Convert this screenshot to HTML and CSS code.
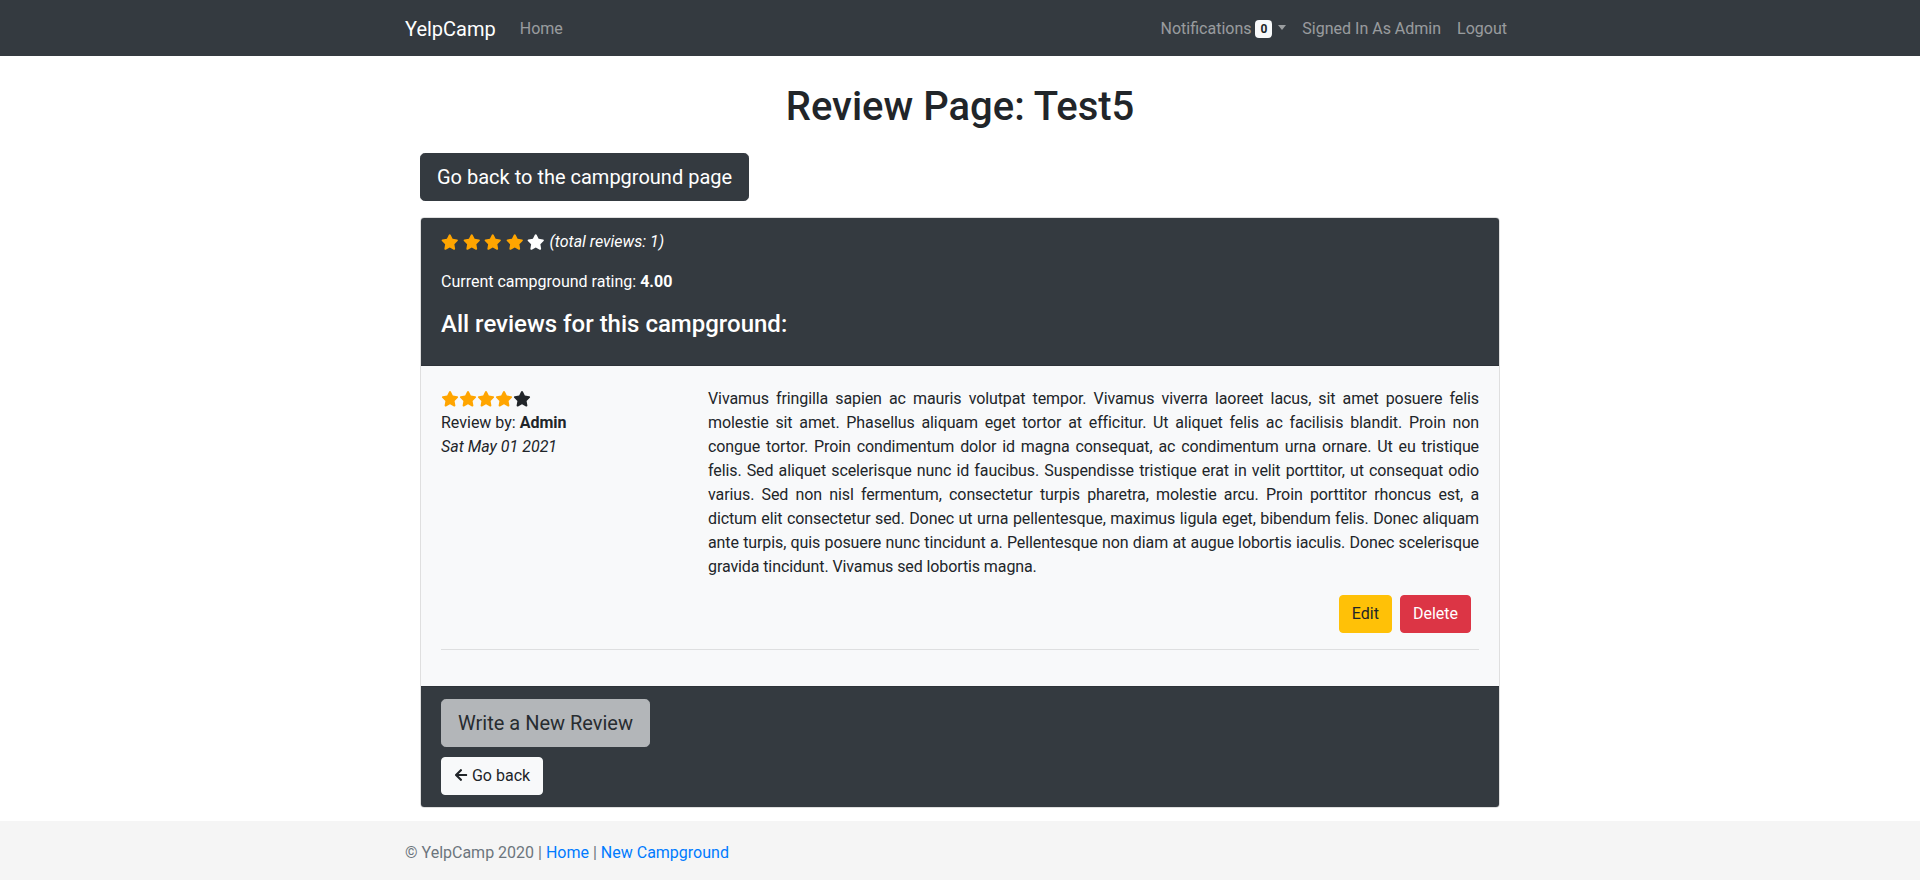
FILE: index.html
```html
<!DOCTYPE html>
<html lang="en">
<head>
<meta charset="utf-8">
<title>YelpCamp - Review Page</title>
<link rel="stylesheet" href="styles.css">
</head>
<body>
<nav class="navbar">
  <div class="container nav-inner">
    <a class="brand" href="#">YelpCamp</a>
    <ul class="nav-list">
      <li><a class="nav-link" href="#">Home</a></li>
    </ul>
    <ul class="nav-list nav-right">
      <li><a class="nav-link" href="#">Notifications <span class="badge">0</span><span class="caret"></span></a></li>
      <li><a class="nav-link" href="#">Signed In As Admin</a></li>
      <li><a class="nav-link" href="#">Logout</a></li>
    </ul>
  </div>
</nav>

<main class="container">
  <div class="inner">
    <h1 class="title">Review Page: Test5</h1>
    <a class="btn btn-lg btn-dark" href="#">Go back to the campground page</a>

    <div class="card">
      <div class="card-header">
        <p class="rating-line">
          <span class="stars-big">
            <svg class="star on" viewBox="0 0 576 512"><path d="M259.3 17.8L194 150.2 47.9 171.5c-26.2 3.8-36.7 36.1-17.7 54.6l105.7 103-25 145.5c-4.5 26.3 23.2 46 46.4 33.7L288 439.6l130.7 68.7c23.2 12.2 50.9-7.4 46.4-33.7l-25-145.5 105.7-103c19-18.5 8.5-50.8-17.7-54.6L382 150.2 316.7 17.8c-11.7-23.6-45.6-23.9-57.4 0z"/></svg>
            <svg class="star on" viewBox="0 0 576 512"><path d="M259.3 17.8L194 150.2 47.9 171.5c-26.2 3.8-36.7 36.1-17.7 54.6l105.7 103-25 145.5c-4.5 26.3 23.2 46 46.4 33.7L288 439.6l130.7 68.7c23.2 12.2 50.9-7.4 46.4-33.7l-25-145.5 105.7-103c19-18.5 8.5-50.8-17.7-54.6L382 150.2 316.7 17.8c-11.7-23.6-45.6-23.9-57.4 0z"/></svg>
            <svg class="star on" viewBox="0 0 576 512"><path d="M259.3 17.8L194 150.2 47.9 171.5c-26.2 3.8-36.7 36.1-17.7 54.6l105.7 103-25 145.5c-4.5 26.3 23.2 46 46.4 33.7L288 439.6l130.7 68.7c23.2 12.2 50.9-7.4 46.4-33.7l-25-145.5 105.7-103c19-18.5 8.5-50.8-17.7-54.6L382 150.2 316.7 17.8c-11.7-23.6-45.6-23.9-57.4 0z"/></svg>
            <svg class="star on" viewBox="0 0 576 512"><path d="M259.3 17.8L194 150.2 47.9 171.5c-26.2 3.8-36.7 36.1-17.7 54.6l105.7 103-25 145.5c-4.5 26.3 23.2 46 46.4 33.7L288 439.6l130.7 68.7c23.2 12.2 50.9-7.4 46.4-33.7l-25-145.5 105.7-103c19-18.5 8.5-50.8-17.7-54.6L382 150.2 316.7 17.8c-11.7-23.6-45.6-23.9-57.4 0z"/></svg>
            <svg class="star off-light" viewBox="0 0 576 512"><path d="M259.3 17.8L194 150.2 47.9 171.5c-26.2 3.8-36.7 36.1-17.7 54.6l105.7 103-25 145.5c-4.5 26.3 23.2 46 46.4 33.7L288 439.6l130.7 68.7c23.2 12.2 50.9-7.4 46.4-33.7l-25-145.5 105.7-103c19-18.5 8.5-50.8-17.7-54.6L382 150.2 316.7 17.8c-11.7-23.6-45.6-23.9-57.4 0z"/></svg>
          </span>
          <em>(total reviews: 1)</em>
        </p>
        <p class="current">Current campground rating: <strong>4.00</strong></p>
        <h4 class="all-reviews">All reviews for this campground:</h4>
      </div>

      <div class="card-body">
        <div class="review-row">
          <div class="col col-meta">
            <div class="stars-small">
              <svg class="star on" viewBox="0 0 576 512"><path d="M259.3 17.8L194 150.2 47.9 171.5c-26.2 3.8-36.7 36.1-17.7 54.6l105.7 103-25 145.5c-4.5 26.3 23.2 46 46.4 33.7L288 439.6l130.7 68.7c23.2 12.2 50.9-7.4 46.4-33.7l-25-145.5 105.7-103c19-18.5 8.5-50.8-17.7-54.6L382 150.2 316.7 17.8c-11.7-23.6-45.6-23.9-57.4 0z"/></svg><svg class="star on" viewBox="0 0 576 512"><path d="M259.3 17.8L194 150.2 47.9 171.5c-26.2 3.8-36.7 36.1-17.7 54.6l105.7 103-25 145.5c-4.5 26.3 23.2 46 46.4 33.7L288 439.6l130.7 68.7c23.2 12.2 50.9-7.4 46.4-33.7l-25-145.5 105.7-103c19-18.5 8.5-50.8-17.7-54.6L382 150.2 316.7 17.8c-11.7-23.6-45.6-23.9-57.4 0z"/></svg><svg class="star on" viewBox="0 0 576 512"><path d="M259.3 17.8L194 150.2 47.9 171.5c-26.2 3.8-36.7 36.1-17.7 54.6l105.7 103-25 145.5c-4.5 26.3 23.2 46 46.4 33.7L288 439.6l130.7 68.7c23.2 12.2 50.9-7.4 46.4-33.7l-25-145.5 105.7-103c19-18.5 8.5-50.8-17.7-54.6L382 150.2 316.7 17.8c-11.7-23.6-45.6-23.9-57.4 0z"/></svg><svg class="star on" viewBox="0 0 576 512"><path d="M259.3 17.8L194 150.2 47.9 171.5c-26.2 3.8-36.7 36.1-17.7 54.6l105.7 103-25 145.5c-4.5 26.3 23.2 46 46.4 33.7L288 439.6l130.7 68.7c23.2 12.2 50.9-7.4 46.4-33.7l-25-145.5 105.7-103c19-18.5 8.5-50.8-17.7-54.6L382 150.2 316.7 17.8c-11.7-23.6-45.6-23.9-57.4 0z"/></svg><svg class="star off-dark" viewBox="0 0 576 512"><path d="M259.3 17.8L194 150.2 47.9 171.5c-26.2 3.8-36.7 36.1-17.7 54.6l105.7 103-25 145.5c-4.5 26.3 23.2 46 46.4 33.7L288 439.6l130.7 68.7c23.2 12.2 50.9-7.4 46.4-33.7l-25-145.5 105.7-103c19-18.5 8.5-50.8-17.7-54.6L382 150.2 316.7 17.8c-11.7-23.6-45.6-23.9-57.4 0z"/></svg>
            </div>
            <div>Review by: <strong>Admin</strong></div>
            <div><em>Sat May 01 2021</em></div>
          </div>
          <div class="col col-content">
            <p class="review-text">Vivamus fringilla sapien ac mauris volutpat tempor. Vivamus viverra laoreet lacus, sit amet posuere felis molestie sit amet. Phasellus aliquam eget tortor at efficitur. Ut aliquet felis ac facilisis blandit. Proin non congue tortor. Proin condimentum dolor id magna consequat, ac condimentum urna ornare. Ut eu tristique felis. Sed aliquet scelerisque nunc id faucibus. Suspendisse tristique erat in velit porttitor, ut consequat odio varius. Sed non nisl fermentum, consectetur turpis pharetra, molestie arcu. Proin porttitor rhoncus est, a dictum elit consectetur sed. Donec ut urna pellentesque, maximus ligula eget, bibendum felis. Donec aliquam ante turpis, quis posuere nunc tincidunt a. Pellentesque non diam at augue lobortis iaculis. Donec scelerisque gravida tincidunt. Vivamus sed lobortis magna.</p>
            <div class="review-actions">
              <a class="btn btn-warning" href="#">Edit</a>
              <a class="btn btn-danger" href="#">Delete</a>
            </div>
          </div>
        </div>
        <hr class="divider">
      </div>

      <div class="card-footer">
        <a class="btn btn-lg btn-light disabled" href="#">Write a New Review</a>
        <a class="btn btn-light" href="#"><svg class="arrow" viewBox="0 0 448 512"><path d="M257.5 445.1l-22.2 22.2c-9.4 9.4-24.6 9.4-33.9 0L7 273c-9.4-9.4-9.4-24.6 0-33.9L201.4 44.7c9.4-9.4 24.6-9.4 33.9 0l22.2 22.2c9.5 9.5 9.3 25-.4 34.3L136.6 216H424c13.3 0 24 10.7 24 24v32c0 13.3-10.7 24-24 24H136.6l120.5 114.8c9.8 9.3 10 24.8.4 34.3z"/></svg> Go back</a>
      </div>
    </div>
  </div>
</main>

<footer class="footer">
  <div class="container">
    <span class="muted">&copy; YelpCamp 2020 |</span> <a href="#">Home</a> <span class="muted">|</span> <a href="#">New Campground</a>
  </div>
</footer>
</body>
</html>
```

FILE: styles.css
```css
* { box-sizing: border-box; }

html, body {
  margin: 0;
  padding: 0;
}

body {
  font-family: Roboto, "Liberation Sans", Arial, sans-serif;
  font-size: 16px;
  line-height: 1.5;
  color: #212529;
  background: #fff;
}

a { text-decoration: none; }

.container {
  width: 100%;
  max-width: 1140px;
  margin: 0 auto;
  padding: 0 15px;
}

/* Navbar */
.navbar {
  background: #343a40;
  padding: 8px 16px;
}

.nav-inner {
  display: flex;
  align-items: center;
}

.brand {
  color: #fff;
  font-size: 20px;
  line-height: 30px;
  padding: 6px 0 4px;
  margin-right: 16px;
}

.nav-list {
  list-style: none;
  margin: 0;
  padding: 0;
  display: flex;
}

.nav-right { margin-left: auto; }

.nav-link {
  display: block;
  padding: 9px 8px 7px;
  color: rgba(255, 255, 255, .5);
  line-height: 24px;
}

.badge {
  display: inline-block;
  background: #f8f9fa;
  color: #212529;
  font-size: 12px;
  font-weight: 700;
  line-height: 1;
  padding: 3px 5px;
  border-radius: 4px;
  vertical-align: 1px;
}

.caret {
  display: inline-block;
  margin-left: 6px;
  vertical-align: 4px;
  border-top: 5px solid rgba(255, 255, 255, .5);
  border-left: 4.5px solid transparent;
  border-right: 4.5px solid transparent;
}

/* Main */
.inner {
  padding: 27px 15px 0;
}

.title {
  margin: 0 0 22px;
  text-align: center;
  font-size: 40px;
  font-weight: 500;
  line-height: 48px;
}

.btn {
  display: inline-block;
  font-size: 16px;
  line-height: 24px;
  padding: 6px 12px;
  border: 1px solid transparent;
  border-radius: 4px;
  text-align: center;
  white-space: nowrap;
}

.btn-lg {
  font-size: 20px;
  line-height: 30px;
  padding: 8px 16px;
  border-radius: 4.8px;
}

.btn-dark { background: #343a40; border-color: #343a40; color: #fff; }
.btn-warning { background: #ffc107; border-color: #ffc107; color: #212529; }
.btn-danger { background: #dc3545; border-color: #dc3545; color: #fff; }
.btn-light { background: #f8f9fa; border-color: #f8f9fa; color: #212529; }
.btn.disabled { opacity: .65; }

/* Card */
.card {
  margin-top: 16px;
  border: 1px solid rgba(0, 0, 0, .125);
  border-radius: 4px;
  overflow: hidden;
}

.card-header {
  background: #343a40;
  color: #fff;
  padding: 12px 20px 18px;
  border-bottom: 1px solid rgba(0, 0, 0, .125);
}

.rating-line {
  margin: 0 0 16px;
  display: flex;
  align-items: center;
  gap: 5px;
}

.stars-big {
  display: inline-flex;
  gap: 4px;
  align-items: center;
}

.stars-big .star {
  width: 17.5px;
  height: 16px;
}

.star.on { fill: #ffa500; }
.star.off-light { fill: #fff; }
.star.off-dark { fill: #212529; }

.current { margin: 0 0 16px; }

.all-reviews {
  margin: 0 0 8px;
  font-size: 24px;
  font-weight: 500;
  line-height: 28.8px;
}

.card-body {
  background: #f8f9fa;
  padding: 21px 20px 20px;
}

.review-row {
  display: flex;
  margin: 0 -15px;
}

.col {
  padding: 0 15px;
}

.col-meta { flex: 0 0 25%; max-width: 25%; }
.col-content { flex: 0 0 75%; max-width: 75%; }

.stars-small {
  display: flex;
  height: 24px;
  align-items: center;
}

.stars-small .star {
  width: 18px;
  height: 15.5px;
}

.review-text {
  margin: 0 0 16px;
  text-align: justify;
  letter-spacing: -0.1px;
}

.review-actions {
  display: flex;
  justify-content: flex-end;
  gap: 8px;
  padding-right: 8px;
}

.divider {
  margin: 16px 0;
  border: 0;
  border-top: 1px solid rgba(0, 0, 0, .1);
}

.card-footer {
  background: #343a40;
  padding: 12px 20px;
  border-top: 1px solid rgba(0, 0, 0, .125);
  display: flex;
  flex-direction: column;
  align-items: flex-start;
  gap: 10px;
}

.arrow {
  width: 14px;
  height: 14px;
  fill: #212529;
  vertical-align: -1px;
}

/* Footer */
.footer {
  margin-top: 13px;
  background: #f5f5f5;
  padding: 20px 0 36px;
}

.footer .muted { color: #6c757d; }
.footer a { color: #007bff; }
```
